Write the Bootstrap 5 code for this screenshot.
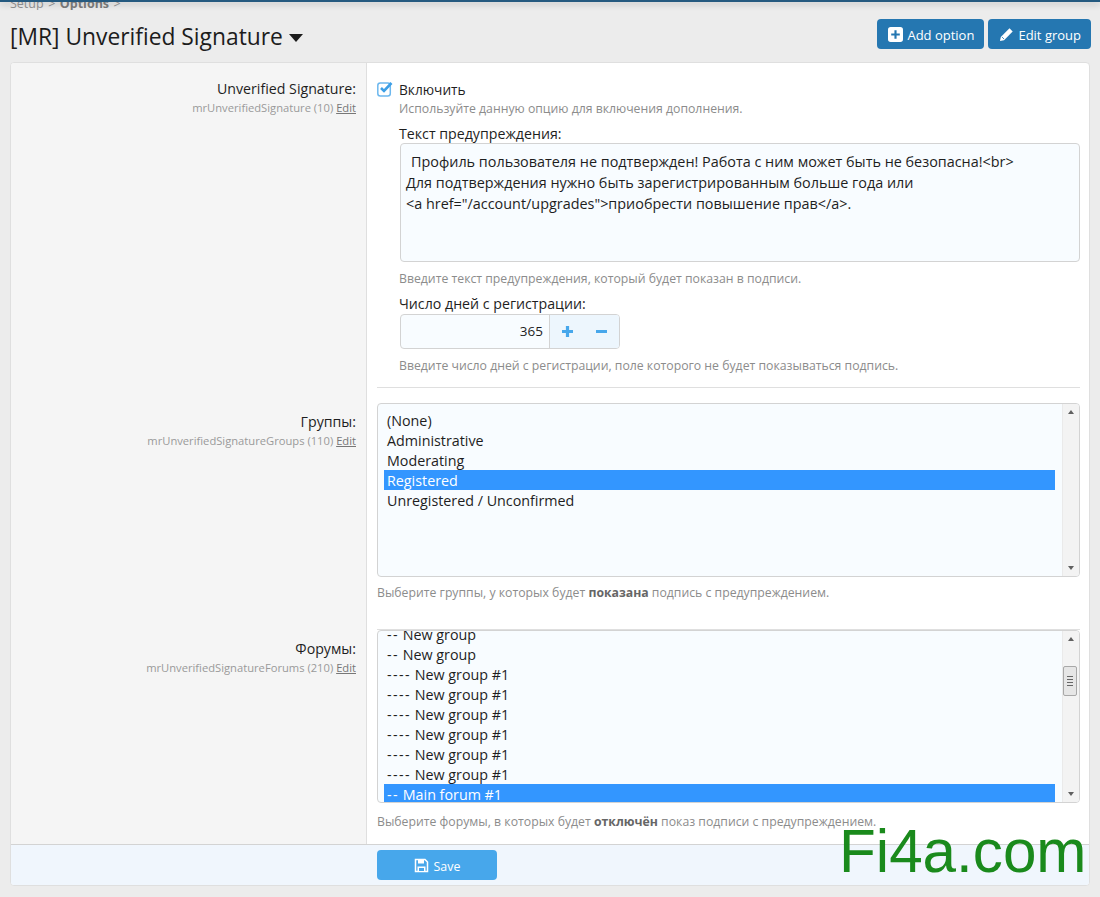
<!DOCTYPE html>
<html lang="ru">
<head>
<meta charset="utf-8">
<title>[MR] Unverified Signature</title>
<link href="https://cdn.jsdelivr.net/npm/bootstrap@5.3.0/dist/css/bootstrap.min.css" rel="stylesheet">
<style>
html,body{height:897px;overflow:hidden}
body{background:#ececec;color:#1e1e1e;font-family:"Open Sans","Noto Sans",sans-serif;font-size:14.2px;line-height:20px;position:relative}
.topline{height:2px;background:#24597f;box-shadow:0 2px 6px rgba(0,0,0,.3)}
.crumbs{height:8px;overflow:hidden;padding-left:10px;font-size:12.5px;line-height:4px;color:#8c8c8c}
.crumbs b{color:#777}
.crumbs span{margin:0 4.5px}
.headrow{height:52px;padding:9px 9px 0 10px}
.pagetitle{font-size:22.8px;line-height:32px;font-weight:400;margin:0;color:#1c1c1c;margin-top:2px}
.caretmark{display:inline-block;width:0;height:0;border-left:7.5px solid transparent;border-right:7.5px solid transparent;border-top:8px solid #1c1c1c;margin-left:6px;vertical-align:3px}
.actbtn{background:#2577b1;color:#fff;border-radius:4px;height:30px;font-size:13px;line-height:30px;padding:2px 10px 0 11px;border:0;display:inline-flex;align-items:center;gap:4px}
.actbtn svg{margin-top:-2px}
.panelbox{margin:0 10px;height:824px;background:#fff;border:1px solid #dfdfdf;border-radius:4px;overflow:hidden;position:relative;width:1080px}
.optrow{display:flex}
.r1{height:325px}.r2{height:228px}.r3{height:229px}
.leftcol{width:356px;flex:none;background:#f5f5f5;border-right:1px solid #dfdfdf;text-align:right;padding-right:10px}
.r1 .leftcol{padding-top:15px}
.r2 .leftcol,.r3 .leftcol{padding-top:23px}
.leftcol .optname{display:block;line-height:22px}
.leftcol .optmeta{display:block;font-size:11.2px;line-height:16px;color:#9a9a9a}
.optmeta u{color:#777}
.rightcol{flex:1;padding:0 9px 0 10px;min-width:0}
.rightbody{height:100%;border-bottom:1px solid #dfdfdf}
.r3 .rightbody{border-bottom:0}
.inner1{padding-top:13px}
.checkline{display:flex;align-items:center;gap:6px;height:24px;padding-top:3px;font-size:13.7px}
.checkline svg{display:block;margin-top:-2px}
.hintline{font-size:12.25px;line-height:18px;color:#8c8c8c}
.hintline b{color:#666}
.sublabel{padding-left:22px}
.blocklabel{line-height:20px;margin-top:6px}
.txtbox{margin-left:23px;margin-top:-1px;height:119px;background:#f8fcff;border:1px solid #d3d3d3;border-radius:4px;font-size:14.4px;line-height:20.9px;padding:8px 5px 6px;white-space:pre;color:#1e1e1e;overflow:hidden}
.leadgap{display:inline-block;width:5px}
.spinbox{margin-left:23px;width:220px;height:35px;display:flex;border:1px solid #d3d3d3;border-radius:4px;overflow:hidden;background:#f8fcff}
.spinval{flex:1;text-align:right;padding-right:6px;line-height:33px;border-right:1px solid #d3d3d3;font-size:13.5px}
.spinbtns{width:69px;display:flex;background:#edf6fd}
.spinbtns i{flex:1;display:flex;align-items:center;justify-content:center}
.listframe{height:174px;margin-top:15px;background:#f8fcff;border:1px solid #d3d3d3;border-radius:4px;display:flex;overflow:hidden}
.r3 .listframe{height:173px}
.listitems{flex:1;padding:6px 7px 0 6px;overflow:hidden;font-size:14.3px}
.r3 .listitems{padding-top:0}
.listitems div{height:20px;line-height:22px;padding-left:3px;white-space:pre}
.listitems em{font-style:normal;letter-spacing:1.4px}
.listitems .firstcut{height:13px;line-height:8px}
.listitems .picked{background:#3396ff;color:#fff}
.r3 .picked{height:19px;line-height:22px}
.scrollrail{width:17px;flex:none;background:#f3f3f3;position:relative;border-left:1px solid #eaeaea}
.arrowup,.arrowdn{position:absolute;left:5px;width:0;height:0;border-left:3.5px solid transparent;border-right:3.5px solid transparent}
.arrowup{top:6px;border-bottom:4px solid #606060}
.arrowdn{bottom:6px;border-top:4px solid #606060}
.thumbgrip{position:absolute;left:0;top:35px;width:14px;height:30px;background:#e6e6e6;border:1px solid #a8a8a8;border-radius:2px;display:flex;flex-direction:column;justify-content:center;gap:2px;padding:0 3px}
.thumbgrip s{display:block;height:1px;background:#666}
.hintgap{margin-top:7px}
.footerbar{height:41px;background:#f0f6fd;border-top:1px solid #d3d3d3;padding:5px 0 0 366px}
.savebtn{width:120px;height:30px;background:#47a7eb;color:#fff;border:0;border-radius:4px;display:flex;align-items:center;justify-content:center;gap:5px;font-size:12.4px;padding:3px 0 0}
.savebtn svg{margin-top:-3px}
.wmark{position:absolute;left:839px;top:819px;font-family:"Liberation Sans",Arial,sans-serif;font-size:60.2px;line-height:66px;color:#1a8a1c;white-space:nowrap}
</style>
</head>
<body>
<div class="topline"></div>
<div class="crumbs">Setup<span>&gt;</span><b>Options</b><span>&gt;</span></div>
<div class="headrow d-flex justify-content-between align-items-start">
  <h1 class="pagetitle">[MR] Unverified Signature<span class="caretmark"></span></h1>
  <div class="d-flex" style="gap:4px">
    <button class="actbtn" type="button"><svg width="15" height="15" viewBox="0 0 14 14"><path fill="#fff" fill-rule="evenodd" d="M2.500 0h9A2.500 2.500 0 0 1 14 2.500v9a2.500 2.500 0 0 1-2.500 2.500h-9A2.500 2.500 0 0 1 0 11.500v-9A2.500 2.500 0 0 1 2.500 0zM6 3v3H3v2h3v3h2V8h3V6H8V3z"/></svg>Add option</button>
    <button class="actbtn" type="button"><svg width="15" height="15" viewBox="0 0 15 15"><path fill="#fff" d="M10.500 1.300l3.200 3.200L5 13.200 1 14l.8-4z"/><path stroke="#2577b1" stroke-width=".8" d="M3 10l2 2"/></svg>Edit group</button>
  </div>
</div>
<div class="panelbox card">
  <div class="optrow r1">
    <div class="leftcol"><span class="optname">Unverified Signature:</span><span class="optmeta">mrUnverifiedSignature (10) <u>Edit</u></span></div>
    <div class="rightcol"><div class="rightbody inner1">
      <div class="checkline"><svg width="16" height="16" viewBox="0 0 16 16"><rect x=".8" y="2" width="12.500" height="13" rx="2.500" fill="#fff" stroke="#6db8ee" stroke-width="1.500"/><path d="M4 7l3 3 7.500-8" fill="none" stroke="#3d9fe6" stroke-width="2.600"/></svg><span>Включить</span></div>
      <div class="hintline sublabel">Используйте данную опцию для включения дополнения.</div>
      <div class="blocklabel sublabel">Текст предупреждения:</div>
      <div class="txtbox"><span class="leadgap"></span>Профиль пользователя не подтвержден! Работа с ним может быть не безопасна!&lt;br&gt;
Для подтверждения нужно быть зарегистрированным больше года или
&lt;a href="/account/upgrades"&gt;приобрести повышение прав&lt;/a&gt;.</div>
      <div class="hintline sublabel" style="margin-top:8px">Введите текст предупреждения, который будет показан в подписи.</div>
      <div class="sublabel" style="margin-top:6px;line-height:20px">Число дней с регистрации:</div>
      <div class="spinbox"><div class="spinval">365</div><div class="spinbtns"><i><svg width="13" height="13" viewBox="0 0 13 13"><path d="M6.500 1v11M1 6.500h11" stroke="#47a7eb" stroke-width="3.200"/></svg></i><i><svg width="13" height="13" viewBox="0 0 13 13"><path d="M1 6.500h11" stroke="#47a7eb" stroke-width="3.200"/></svg></i></div></div>
      <div class="hintline sublabel" style="margin-top:8px">Введите число дней с регистрации, поле которого не будет показываться подпись.</div>
    </div></div>
  </div>
  <div class="optrow r2">
    <div class="leftcol"><span class="optname">Группы:</span><span class="optmeta">mrUnverifiedSignatureGroups (110) <u>Edit</u></span></div>
    <div class="rightcol"><div class="rightbody">
      <div class="listframe"><div class="listitems">
        <div>(None)</div><div>Administrative</div><div>Moderating</div><div class="picked">Registered</div><div>Unregistered / Unconfirmed</div>
      </div><div class="scrollrail"><span class="arrowup"></span><span class="arrowdn"></span></div></div>
      <div class="hintline hintgap">Выберите группы, у которых будет <b>показана</b> подпись с предупреждением.</div>
    </div></div>
  </div>
  <div class="optrow r3">
    <div class="leftcol"><span class="optname">Форумы:</span><span class="optmeta">mrUnverifiedSignatureForums (210) <u>Edit</u></span></div>
    <div class="rightcol"><div class="rightbody">
      <div class="listframe"><div class="listitems">
        <div class="firstcut"><em>--</em> New group</div><div><em>--</em> New group</div><div><em>----</em> New group #1</div><div><em>----</em> New group #1</div><div><em>----</em> New group #1</div><div><em>----</em> New group #1</div><div><em>----</em> New group #1</div><div><em>----</em> New group #1</div><div class="picked"><em>--</em> Main forum #1</div>
      </div><div class="scrollrail"><span class="arrowup"></span><span class="thumbgrip"><s></s><s></s><s></s><s></s></span><span class="arrowdn"></span></div></div>
      <div class="hintline" style="margin-top:10px">Выберите форумы, в которых будет <b>отключён</b> показ подписи с предупреждением.</div>
    </div></div>
  </div>
  <div class="footerbar"><button class="savebtn" type="button"><svg width="15" height="15" viewBox="0 0 15 15"><path fill="none" stroke="#fff" stroke-width="1.500" d="M1.500 1.500h9.500l2.500 2.500v9.500h-12z"/><path fill="#fff" d="M4 1.500h6v4H4zM3.500 8.500h8v5h-8z"/><path fill="#47a7eb" d="M5 10h5v3H5z"/></svg>Save</button></div>
</div>
<div class="wmark">Fi4a.com</div>
<script src="https://cdn.jsdelivr.net/npm/bootstrap@5.3.0/dist/js/bootstrap.bundle.min.js"></script>
</body>
</html>
